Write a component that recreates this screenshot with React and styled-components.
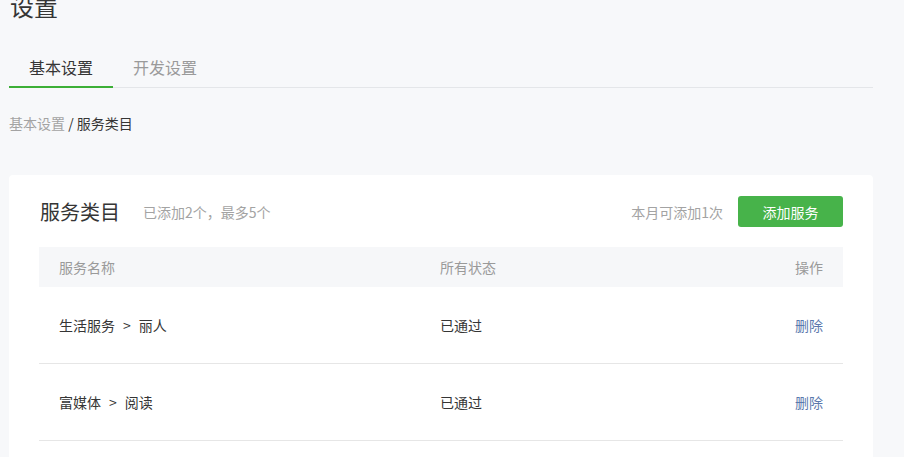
import React from "react";
import styled, { createGlobalStyle } from "styled-components";

const GlobalStyle = createGlobalStyle`
  html, body {
    margin: 0;
    padding: 0;
    background: #f7f8fa;
    font-family: "Noto Sans CJK SC", "Noto Sans", sans-serif;
    color: #333;
  }
`;

const Page = styled.div`
  width: 864px;
  padding-left: 9px;
  margin-top: -10px;
`;

const PageTitle = styled.h1`
  margin: 0 0 0 1px;
  font-size: 24px;
  line-height: 32px;
  font-weight: 400;
  color: #353535;
`;

const Tabs = styled.div`
  display: flex;
  margin-top: 26px;
  border-bottom: 1px solid #e4e6e9;
`;

const Tab = styled.div`
  padding: 0 20px;
  height: 40px;
  line-height: 38px;
  font-size: 16px;
  color: ${(p) => (p.$active ? "#353535" : "#9a9a9a")};
  border-bottom: 2px solid ${(p) => (p.$active ? "#3caf36" : "transparent")};
  margin-bottom: -1px;
  box-sizing: border-box;
`;

const Crumbs = styled.div`
  margin-top: 25px;
  font-size: 14px;
  line-height: 20px;
  color: #353535;
`;

const CrumbLink = styled.span`
  color: #a3a3a3;
`;

const Card = styled.div`
  margin-top: 42px;
  background: #fff;
  border-radius: 4px;
  padding: 21px 30px 30px;
`;

const CardHead = styled.div`
  display: flex;
  align-items: center;
  height: 31px;
`;

const CardTitle = styled.h2`
  margin: 0 0 0 1px;
  font-size: 20px;
  font-weight: 400;
  color: #353535;
`;

const Hint = styled.span`
  font-size: 14px;
  color: #a3a3a3;
  margin-left: ${(p) => p.$left || 0}px;
`;

const Spacer = styled.div`
  flex: 1;
`;

const PrimaryButton = styled.button`
  margin-left: 15px;
  width: 105px;
  height: 31px;
  border: none;
  border-radius: 3px;
  background: #47b34a;
  color: #fff;
  font-family: inherit;
  font-size: 14px;
`;

const Table = styled.div`
  margin-top: 20px;
`;

const Row = styled.div`
  display: grid;
  grid-template-columns: 381px 1fr auto;
  align-items: center;
  padding: 0 20px;
  height: ${(p) => (p.$head ? "40px" : "76px")};
  background: ${(p) => (p.$head ? "#f6f7f9" : "transparent")};
  border-bottom: ${(p) => (p.$head ? "none" : "1px solid #e6e6e6")};
  font-size: 14px;
  color: ${(p) => (p.$head ? "#9a9a9a" : "#353535")};
`;

const Sep = styled.span`
  margin: 0 8px;
`;

const Action = styled.span`
  color: #5b79ad;
`;

const rows = [
  { group: "生活服务", name: "丽人", status: "已通过" },
  { group: "富媒体", name: "阅读", status: "已通过" },
];

export default function App() {
  return (
    <>
      <GlobalStyle />
      <Page>
        <PageTitle>设置</PageTitle>
        <Tabs>
          <Tab $active>基本设置</Tab>
          <Tab>开发设置</Tab>
        </Tabs>
        <Crumbs>
          <CrumbLink>基本设置</CrumbLink> / 服务类目
        </Crumbs>
        <Card>
          <CardHead>
            <CardTitle>服务类目</CardTitle>
            <Hint $left={23}>已添加2个，最多5个</Hint>
            <Spacer />
            <Hint>本月可添加1次</Hint>
            <PrimaryButton>添加服务</PrimaryButton>
          </CardHead>
          <Table>
            <Row $head>
              <span>服务名称</span>
              <span>所有状态</span>
              <span>操作</span>
            </Row>
            {rows.map((r) => (
              <Row key={r.name}>
                <span>
                  {r.group}
                  <Sep>&gt;</Sep>
                  {r.name}
                </span>
                <span>{r.status}</span>
                <Action>删除</Action>
              </Row>
            ))}
          </Table>
        </Card>
      </Page>
    </>
  );
}
